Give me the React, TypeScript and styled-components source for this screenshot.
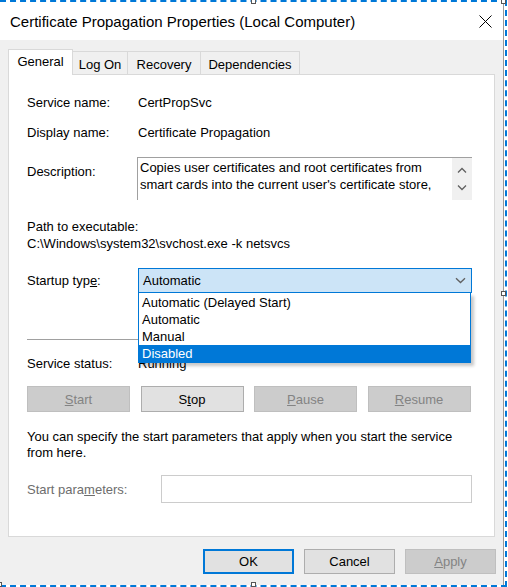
import React from 'react';
import styled, { createGlobalStyle, css } from 'styled-components';

const GlobalStyle = createGlobalStyle`
  html, body {
    margin: 0;
    padding: 0;
    background: #ffffff;
  }
  body {
    font-family: "Liberation Sans", Arial, sans-serif;
    font-size: 13px;
    color: #000000;
  }
`;

const startupOptions = [
  'Automatic (Delayed Start)',
  'Automatic',
  'Manual',
  'Disabled',
];

function App() {
  return (
    <>
      <GlobalStyle />
      <Frame>
        <Window>
          <TitleBar>
            <Title>Certificate Propagation Properties (Local Computer)</Title>
            <CloseIcon width="13" height="13" viewBox="0 0 13 13">
              <path d="M0.5 0.5 L12.5 12.5 M12.5 0.5 L0.5 12.5" stroke="#000" strokeWidth="1" />
            </CloseIcon>
          </TitleBar>
          <Body>
            <TabStrip>
              <Tab $width={65} $active>General</Tab>
              <Tab $width={55}>Log On</Tab>
              <Tab $width={73}>Recovery</Tab>
              <Tab $width={99}>Dependencies</Tab>
            </TabStrip>
            <Panel>
              <InfoRow>
                <Label>Service name:</Label>
                <Value>CertPropSvc</Value>
              </InfoRow>
              <InfoRow $gap={14}>
                <Label>Display name:</Label>
                <Value>Certificate Propagation</Value>
              </InfoRow>
              <DescriptionRow>
                <Label $padTop={7}>Description:</Label>
                <DescriptionBox>
                  <DescriptionText>
                    Copies user certificates and root certificates from smart cards into the current user's certificate store,
                  </DescriptionText>
                  <ScrollTrack>
                    <svg width="10" height="7" viewBox="0 0 10 7">
                      <path d="M1 5.5 L5 1.5 L9 5.5" fill="none" stroke="#606060" strokeWidth="1.3" />
                    </svg>
                    <svg width="10" height="7" viewBox="0 0 10 7">
                      <path d="M1 1.5 L5 5.5 L9 1.5" fill="none" stroke="#606060" strokeWidth="1.3" />
                    </svg>
                  </ScrollTrack>
                </DescriptionBox>
              </DescriptionRow>
              <PathBlock>
                <div>Path to executable:</div>
                <div>C:\Windows\system32\svchost.exe -k netsvcs</div>
              </PathBlock>
              <StartupRow>
                <Label>
                  Startup typ<u>e</u>:
                </Label>
                <ComboWrap>
                  <Combo>
                    <span>Automatic</span>
                    <svg width="11" height="7" viewBox="0 0 11 7">
                      <path d="M1 1.2 L5.5 5.5 L10 1.2" fill="none" stroke="#606060" strokeWidth="1.3" />
                    </svg>
                  </Combo>
                  <DropList>
                    {startupOptions.map((opt) => (
                      <DropItem key={opt} $selected={opt === 'Disabled'}>
                        {opt}
                      </DropItem>
                    ))}
                  </DropList>
                </ComboWrap>
              </StartupRow>
              <Separator />
              <InfoRow $gap={16}>
                <Label>Service status:</Label>
                <Value>Running</Value>
              </InfoRow>
              <ControlButtons>
                <Button $disabled>
                  <u>S</u>tart
                </Button>
                <Button>
                  S<u>t</u>op
                </Button>
                <Button $disabled>
                  <u>P</u>ause
                </Button>
                <Button $disabled>
                  <u>R</u>esume
                </Button>
              </ControlButtons>
              <HelpText>
                You can specify the start parameters that apply when you start the service
                <br />
                from here.
              </HelpText>
              <ParamsRow>
                <ParamsLabel>
                  Start para<u>m</u>eters:
                </ParamsLabel>
                <ParamsInput />
              </ParamsRow>
            </Panel>
            <Footer>
              <DialogButton $default>OK</DialogButton>
              <DialogButton>Cancel</DialogButton>
              <DialogButton $disabled>
                <u>A</u>pply
              </DialogButton>
            </Footer>
          </Body>
        </Window>
        <Handle style={{ left: 251, top: -3 }} />
        <Handle style={{ left: 501, top: -3 }} />
        <Handle style={{ left: 501, top: 289 }} />
        <Handle style={{ left: 251, top: 580 }} />
        <Handle style={{ left: -3, top: 580 }} />
      </Frame>
    </>
  );
}

const Frame = styled.div`
  position: relative;
  width: 507px;
  height: 587px;
  box-sizing: border-box;
  border-top: 2px dashed #0078d7;
  border-right: 2px dashed #0078d7;
  border-bottom: 2px dashed #0078d7;
`;

const Handle = styled.div`
  position: absolute;
  width: 5px;
  height: 5px;
  box-sizing: border-box;
  background: #ffffff;
  border: 1px solid #555555;
`;

const Window = styled.div`
  display: flex;
  flex-direction: column;
  width: 504px;
  height: 100%;
  box-sizing: border-box;
  border-right: 1px solid #9a9a9a;
`;

const TitleBar = styled.div`
  display: flex;
  align-items: center;
  justify-content: space-between;
  height: 38px;
  padding: 0 11px 0 10px;
  background: #ffffff;
`;

const Title = styled.div`
  font-size: 15px;
  color: #000000;
`;

const CloseIcon = styled.svg`
  display: block;
`;

const Body = styled.div`
  flex: 1;
  display: flex;
  flex-direction: column;
  background: #f0f0f0;
  padding: 9px 8px 0 8px;
`;

const TabStrip = styled.div`
  display: flex;
  align-items: flex-end;
  height: 26px;
  margin-bottom: -1px;
  position: relative;
  z-index: 1;
`;

const Tab = styled.div<{ $width: number; $active?: boolean }>`
  display: flex;
  align-items: center;
  justify-content: center;
  box-sizing: border-box;
  width: ${(p) => p.$width}px;
  height: 24px;
  padding-top: 2px;
  background: #f0f0f0;
  border: 1px solid #d9d9d9;
  border-left: none;
  ${(p) =>
    p.$active &&
    css`
      height: 26px;
      padding-top: 0;
      padding-bottom: 2px;
      background: #ffffff;
      border-left: 1px solid #d9d9d9;
      border-bottom: none;
    `}
`;

const Panel = styled.div`
  height: 463px;
  box-sizing: border-box;
  background: #ffffff;
  border: 1px solid #d9d9d9;
  padding: 20px 0 0 18px;
  display: flex;
  flex-direction: column;
`;

const InfoRow = styled.div<{ $gap?: number }>`
  display: flex;
  line-height: 16px;
  margin-top: ${(p) => p.$gap ?? 0}px;
`;

const Label = styled.div<{ $padTop?: number }>`
  width: 111px;
  flex-shrink: 0;
  padding-top: ${(p) => p.$padTop ?? 0}px;
  line-height: 16px;
`;

const Value = styled.div`
  white-space: nowrap;
`;

const DescriptionRow = styled.div`
  display: flex;
  margin-top: 16px;
`;

const DescriptionBox = styled.div`
  display: flex;
  width: 335px;
  height: 43px;
  margin-left: -1px;
  box-sizing: border-box;
  border-top: 1px solid #a0a0a0;
  border-left: 1px solid #a0a0a0;
  background: #ffffff;
`;

const DescriptionText = styled.div`
  flex: 1;
  padding: 1px 8px 0 2px;
  line-height: 17px;
`;

const ScrollTrack = styled.div`
  width: 20px;
  display: flex;
  flex-direction: column;
  align-items: center;
  justify-content: space-around;
  background: #f0f0f0;
  padding: 4px 0;
`;

const PathBlock = styled.div`
  margin-top: 18px;
  line-height: 17px;
`;

const StartupRow = styled.div`
  display: flex;
  align-items: center;
  margin-top: 16px;
`;

const ComboWrap = styled.div`
  position: relative;
  z-index: 2;
`;

const Combo = styled.div`
  display: flex;
  align-items: center;
  justify-content: space-between;
  width: 334px;
  height: 25px;
  box-sizing: border-box;
  padding: 0 5px 0 4px;
  background: #cce4f7;
  border: 1px solid #0078d7;
`;

const DropList = styled.div`
  position: absolute;
  left: 0;
  top: 25px;
  width: 333px;
  box-sizing: border-box;
  padding-top: 1px;
  background: #ffffff;
  border: 1px solid #0078d7;
  border-top: none;
  box-shadow: 3px 3px 3px rgba(0, 0, 0, 0.22);
`;

const DropItem = styled.div<{ $selected?: boolean }>`
  height: 17px;
  line-height: 17px;
  padding-left: 3px;
  background: ${(p) => (p.$selected ? '#0078d7' : 'transparent')};
  color: ${(p) => (p.$selected ? '#ffffff' : '#000000')};
`;

const Separator = styled.div`
  width: 444px;
  height: 1px;
  margin-top: 46px;
  background: #a0a0a0;
`;

const ControlButtons = styled.div`
  display: grid;
  grid-template-columns: repeat(4, 103px);
  column-gap: 10.5px;
  margin-top: 14px;
`;

const buttonBase = css<{ $disabled?: boolean }>`
  display: flex;
  align-items: center;
  justify-content: center;
  box-sizing: border-box;
  font-family: inherit;
  font-size: 13px;
  background: ${(p) => (p.$disabled ? '#cccccc' : '#e1e1e1')};
  border: 1px solid ${(p) => (p.$disabled ? '#bfbfbf' : '#adadad')};
  color: ${(p) => (p.$disabled ? '#838383' : '#000000')};
`;

const Button = styled.div<{ $disabled?: boolean }>`
  ${buttonBase};
  height: 26px;
`;

const HelpText = styled.div`
  margin-top: 17px;
  line-height: 16px;
`;

const ParamsRow = styled.div`
  display: flex;
  align-items: center;
  margin-top: 14px;
`;

const ParamsLabel = styled.div`
  width: 134px;
  color: #6d6d6d;
`;

const ParamsInput = styled.div`
  width: 311px;
  height: 28px;
  box-sizing: border-box;
  border: 1px solid #cccccc;
  background: #ffffff;
`;

const Footer = styled.div`
  display: flex;
  justify-content: flex-end;
  gap: 10px;
  margin-top: 12px;
  margin-right: -1px;
`;

const DialogButton = styled.div<{ $disabled?: boolean; $default?: boolean }>`
  ${buttonBase};
  width: 91px;
  height: 25px;
  ${(p) =>
    p.$default &&
    css`
      border: 2px solid #0078d7;
    `}
`;

export default App;
